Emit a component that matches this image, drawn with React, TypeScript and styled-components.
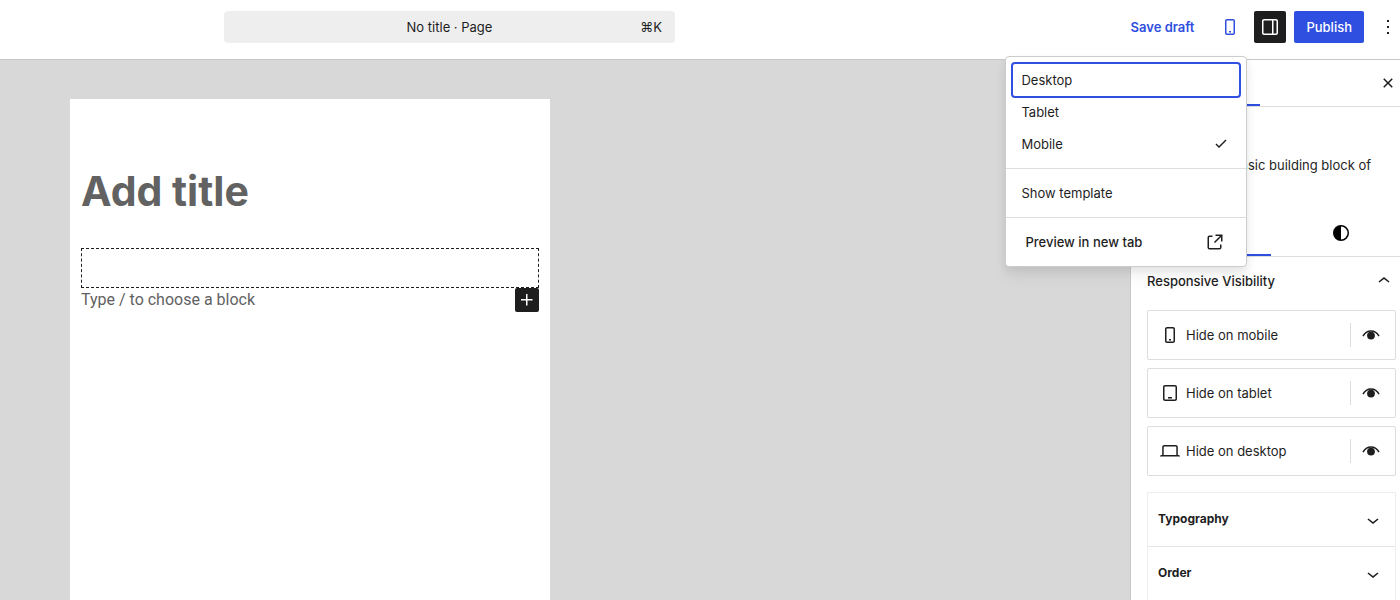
import React, { useState } from "react";
import styled, { createGlobalStyle, css } from "styled-components";

const color = {
  accent: "#2f4fe0",
  ink: "#1e1e1e",
  line: "#dddddd",
  canvas: "#d8d8d8",
};

const GlobalStyle = createGlobalStyle`
  * { box-sizing: border-box; }
  body {
    margin: 0;
    background: #fff;
    color: ${color.ink};
    font: 400 13px/20px Inter, "Liberation Sans", sans-serif;
  }
  button {
    font: inherit;
    color: inherit;
    margin: 0;
    padding: 0;
    border: 0;
    background: none;
    cursor: pointer;
  }
  h1, h2, p { margin: 0; }
`;

const paths = {
  mobile:
    "M15 4H9c-1.1 0-2 .9-2 2v12c0 1.1.9 2 2 2h6c1.1 0 2-.9 2-2V6c0-1.1-.9-2-2-2zm.5 14c0 .3-.2.5-.5.5H9c-.3 0-.5-.2-.5-.5V6c0-.3.2-.5.5-.5h6c.3 0 .5.2.5.5v12zm-4.5-.5h2V16h-2v1.5z",
  tablet:
    "M17 4H7c-1.1 0-2 .9-2 2v12c0 1.1.9 2 2 2h10c1.1 0 2-.9 2-2V6c0-1.1-.9-2-2-2zm.5 14c0 .3-.2.5-.5.5H7c-.3 0-.5-.2-.5-.5V6c0-.3.2-.5.5-.5h10c.3 0 .5.2.5.5v12zm-7.5-.5h4V16h-4v1.5z",
  desktop:
    "M20.5 16h-.7V8c0-1.1-.9-2-2-2H6.2c-1.1 0-2 .9-2 2v8h-.7c-.8 0-1.5.7-1.5 1.5h20c0-.8-.7-1.5-1.5-1.5zM5.7 8c0-.3.2-.5.5-.5h11.6c.3 0 .5.2.5.5v8H5.7V8z",
  external:
    "M19.5 4.5h-7V6h4.44l-5.97 5.97 1.06 1.06L18 7.06v4.44h1.5v-7Zm-13 1a2 2 0 0 0-2 2v10a2 2 0 0 0 2 2h10a2 2 0 0 0 2-2v-3H17v3a.5.5 0 0 1-.5.5h-10a.5.5 0 0 1-.5-.5v-10a.5.5 0 0 1 .5-.5h3V5.5h-3Z",
  check: "M16.5 7.5 10 13.9l-2.5-2.4-1 1 3.5 3.6 7.5-7.6z",
  close:
    "M12 13.06l3.712 3.713 1.061-1.06L13.061 12l3.712-3.712-1.06-1.06L12 10.938 8.288 7.227l-1.061 1.06L10.939 12l-3.712 3.712 1.06 1.061L12 13.061z",
  drawer:
    "M18 4H6c-1.1 0-2 .9-2 2v12c0 1.1.9 2 2 2h12c1.1 0 2-.9 2-2V6c0-1.1-.9-2-2-2zm-4 14.5H6c-.3 0-.5-.2-.5-.5V6c0-.3.2-.5.5-.5h8v13zm4.5-.5c0 .3-.2.5-.5.5h-2.5v-13H18c.3 0 .5.2.5.5v12z",
  more: "M13 19h-2v-2h2v2zm0-6h-2v-2h2v2zm0-6h-2V5h2v2z",
  up: "M6.5 12.4L12 8l5.5 4.4-.9 1.2L12 10l-4.5 3.6-1-1.2z",
  down: "M17.5 11.6L12 16l-5.5-4.4.9-1.2L12 14l4.5-3.6 1 1.2z",
  plus: "M11 12.5V17.5H12.5V12.5H17.5V11H12.5V6H11V11H6V12.5H11Z",
  contrast:
    "M20 12a8 8 0 1 1-16 0 8 8 0 0 1 16 0Zm-1.5 0a6.5 6.5 0 0 1-6.5 6.5v-13a6.5 6.5 0 0 1 6.5 6.5Z",
  gear: "M4 6.5h9V8H4zM17 6.5h3V8h-3zM4 16h3v1.5H4zM11 16h9v1.5h-9zM15 5a2.2 2.2 0 1 0 0 4.4A2.2 2.2 0 0 0 15 5zM9 14.5a2.2 2.2 0 1 0 0 4.4 2.2 2.2 0 0 0 0-4.4z",
};

type IconName = keyof typeof paths;

const Svg = styled.svg`
  display: block;
  flex: none;
  width: 24px;
  height: 24px;
  fill: currentColor;
`;

const Icon = ({ name }: { name: IconName }) => (
  <Svg viewBox="0 0 24 24" aria-hidden="true">
    <path fillRule="evenodd" d={paths[name]} />
  </Svg>
);

const EyeIcon = () => (
  <Svg viewBox="0 0 24 24" aria-hidden="true">
    <path
      d="M4 13.2C5.6 10 8.4 8 12 8s6.4 2 8 5.2"
      fill="none"
      stroke="currentColor"
      strokeWidth="1.5"
    />
    <circle cx="12" cy="12.6" r="3.9" />
  </Svg>
);

const Page = styled.div`
  display: flex;
  flex-direction: column;
  min-height: 100vh;
`;

const Header = styled.header`
  display: flex;
  justify-content: space-between;
  gap: 24px;
  padding: 11px 0 16px 16%;
  border-bottom: 1px solid #c8c8c8;
`;

const CommandBar = styled.button`
  display: grid;
  grid-template-columns: 1fr auto 1fr;
  align-items: center;
  flex: 0 1 451px;
  height: 32px;
  padding: 0 13px;
  border-radius: 4px;
  background: #eeeeee;
`;

const Shortcut = styled.span`
  justify-self: end;
`;

const Actions = styled.div`
  display: flex;
  align-items: center;
  gap: 8px;
`;

const TextButton = styled.button<{ $primary?: boolean }>`
  height: 32px;
  padding: 0 12px;
  border-radius: 2px;
  font-weight: ${(p) => (p.$primary ? 500 : 600)};
  white-space: nowrap;
  color: ${(p) => (p.$primary ? "#fff" : color.accent)};
  background: ${(p) => (p.$primary ? color.accent : "transparent")};
`;

const IconButton = styled.button<{ $tone?: "dark" | "accent" }>`
  display: flex;
  align-items: center;
  justify-content: center;
  flex: none;
  width: 32px;
  height: 32px;
  border-radius: 2px;
  ${(p) => p.$tone === "dark" && css`background: ${color.ink}; color: #fff;`}
  ${(p) => p.$tone === "accent" && css`color: ${color.accent};`}
`;

const EdgeButton = styled(IconButton)`
  justify-content: flex-end;
  width: 28px;
`;

const MenuAnchor = styled.div`
  position: relative;
`;

const Menu = styled.div`
  position: absolute;
  z-index: 2;
  top: 45px;
  right: -1px;
  width: 242px;
  border: 1px solid #cccccc;
  border-radius: 4px;
  background: #fff;
  box-shadow: 0 4px 8px rgba(0, 0, 0, 0.08), 0 12px 16px rgba(0, 0, 0, 0.04);
`;

const MenuGroup = styled.div`
  padding: 8px 7px;
  & + & { border-top: 1px solid ${color.line}; }
  &:first-child { padding-top: 7px; }
`;

const MenuItem = styled.button<{ $focused?: boolean; $strong?: boolean }>`
  display: flex;
  align-items: center;
  justify-content: space-between;
  width: 100%;
  height: 32px;
  padding: ${(p) => (p.$strong ? "0 12px" : "0 6px 0 8px")};
  border-radius: 2px;
  text-align: left;
  font-weight: ${(p) => (p.$strong ? 500 : 400)};
  outline: none;
  box-shadow: ${(p) => (p.$focused ? `0 0 0 2px ${color.accent}` : "none")};
`;

const Body = styled.div`
  display: flex;
  flex: 1;
`;

const Canvas = styled.main`
  display: flex;
  flex: 1;
  padding: 39px 70px 0;
  background: ${color.canvas};
`;

const Sheet = styled.article`
  flex: 0 1 480px;
  padding: 68px 11px 0;
  background: #fff;
`;

const Title = styled.h1`
  font-size: 41px;
  line-height: 48px;
  font-weight: 700;
  color: #626262;
`;

const EmptyBlock = styled.div`
  height: 40px;
  margin-top: 33px;
  border: 1px dashed ${color.ink};
`;

const Prompt = styled.div`
  display: flex;
  justify-content: space-between;
  font-family: Roboto, "Liberation Sans", sans-serif;
  font-size: 16px;
  line-height: 24px;
  color: #626262;
`;

const Inserter = styled.button`
  width: 24px;
  height: 24px;
  border-radius: 2px;
  background: ${color.ink};
  color: #fff;
`;

const Sidebar = styled.aside`
  flex: 0 0 270px;
  overflow: hidden;
  border-left: 1px solid #c8c8c8;
  background: #fff;
`;

const Tabs = styled.div`
  display: flex;
  height: 47px;
  border-bottom: 1px solid ${color.line};
`;

const Tab = styled.button<{ $active?: boolean }>`
  padding: 0 16px;
  box-shadow: ${(p) => (p.$active ? `inset 0 -2px 0 ${color.accent}` : "none")};
`;

const TabsEnd = styled.div`
  display: flex;
  align-items: center;
  margin-left: auto;
`;

const Description = styled.div`
  padding: 22px 16px 14px;
  h2 { font-size: 13px; line-height: 20px; font-weight: 500; }
  p { padding-top: 6px; }
`;

const IconTabs = styled.div`
  display: flex;
  height: 48px;
  border-bottom: 1px solid ${color.line};
`;

const IconTab = styled.button<{ $active?: boolean }>`
  display: flex;
  align-items: center;
  justify-content: center;
  flex: 0 0 140px;
  color: #000;
  box-shadow: ${(p) => (p.$active ? `inset 0 -2px 0 ${color.accent}` : "none")};
`;

const PanelToggle = styled.button`
  display: flex;
  align-items: center;
  justify-content: space-between;
  width: 100%;
  height: 48px;
  padding: 0 4px 0 16px;
  font-weight: 500;
`;

const Stack = styled.div`
  display: flex;
  flex-direction: column;
  gap: 8px;
  padding: 5px 4px 16px 16px;
`;

const Card = styled.div`
  display: flex;
  align-items: center;
  gap: 4px;
  height: 50px;
  padding: 0 12px 0 10px;
  border: 1px solid ${color.line};
  border-radius: 2px;
`;

const Visibility = styled.button`
  margin-left: auto;
  padding-left: 8px;
  border-left: 1px solid ${color.line};
`;

const Accordion = styled.div`
  margin: 0 4px 0 16px;
  border: 1px solid #eeeeee;
`;

const AccordionRow = styled.button`
  display: flex;
  align-items: center;
  justify-content: space-between;
  width: 100%;
  height: 53px;
  padding: 0 10px;
  font-size: 12px;
  font-weight: 700;
  & + & { border-top: 1px solid #e4e4e4; height: 54px; }
  span { padding-bottom: 2px; }
`;

const devices = ["Desktop", "Tablet", "Mobile"];
const visibility: { icon: IconName; label: string }[] = [
  { icon: "mobile", label: "Hide on mobile" },
  { icon: "tablet", label: "Hide on tablet" },
  { icon: "desktop", label: "Hide on desktop" },
];
const sections = ["Typography", "Order"];

export default function App() {
  const [device, setDevice] = useState("Mobile");

  return (
    <Page>
      <GlobalStyle />
      <Header>
        <CommandBar>
          <span />
          <span>No title · Page</span>
          <Shortcut>⌘K</Shortcut>
        </CommandBar>
        <Actions>
          <TextButton>Save draft</TextButton>
          <MenuAnchor>
            <IconButton $tone="accent" aria-label="View" aria-haspopup="menu">
              <Icon name="mobile" />
            </IconButton>
            <Menu role="menu">
              <MenuGroup>
                {devices.map((d, i) => (
                  <MenuItem
                    key={d}
                    role="menuitemradio"
                    aria-checked={d === device}
                    $focused={i === 0}
                    onClick={() => setDevice(d)}
                  >
                    {d}
                    {d === device && <Icon name="check" />}
                  </MenuItem>
                ))}
              </MenuGroup>
              <MenuGroup>
                <MenuItem role="menuitem">Show template</MenuItem>
              </MenuGroup>
              <MenuGroup>
                <MenuItem role="menuitem" $strong>
                  Preview in new tab
                  <Icon name="external" />
                </MenuItem>
              </MenuGroup>
            </Menu>
          </MenuAnchor>
          <IconButton $tone="dark" aria-label="Settings">
            <Icon name="drawer" />
          </IconButton>
          <TextButton $primary>Publish</TextButton>
          <EdgeButton aria-label="Options">
            <Icon name="more" />
          </EdgeButton>
        </Actions>
      </Header>
      <Body>
        <Canvas>
          <Sheet>
            <Title>Add title</Title>
            <EmptyBlock />
            <Prompt>
              <span>Type / to choose a block</span>
              <Inserter aria-label="Add block">
                <Icon name="plus" />
              </Inserter>
            </Prompt>
          </Sheet>
        </Canvas>
        <Sidebar>
          <Tabs>
            <Tab>Page</Tab>
            <Tab $active>Block</Tab>
            <TabsEnd>
              <EdgeButton aria-label="Close settings">
                <Icon name="close" />
              </EdgeButton>
            </TabsEnd>
          </Tabs>
          <Description>
            <h2>Paragraph</h2>
            <p>Start with the basic building block of all narrative.</p>
          </Description>
          <IconTabs>
            <IconTab $active aria-label="Settings">
              <Icon name="gear" />
            </IconTab>
            <IconTab aria-label="Styles">
              <Icon name="contrast" />
            </IconTab>
          </IconTabs>
          <PanelToggle aria-expanded="true">
            Responsive Visibility
            <Icon name="up" />
          </PanelToggle>
          <Stack>
            {visibility.map((v) => (
              <Card key={v.label}>
                <Icon name={v.icon} />
                <span>{v.label}</span>
                <Visibility aria-label={v.label}>
                  <EyeIcon />
                </Visibility>
              </Card>
            ))}
          </Stack>
          <Accordion>
            {sections.map((s) => (
              <AccordionRow key={s}>
                <span>{s}</span>
                <Icon name="down" />
              </AccordionRow>
            ))}
          </Accordion>
        </Sidebar>
      </Body>
    </Page>
  );
}
